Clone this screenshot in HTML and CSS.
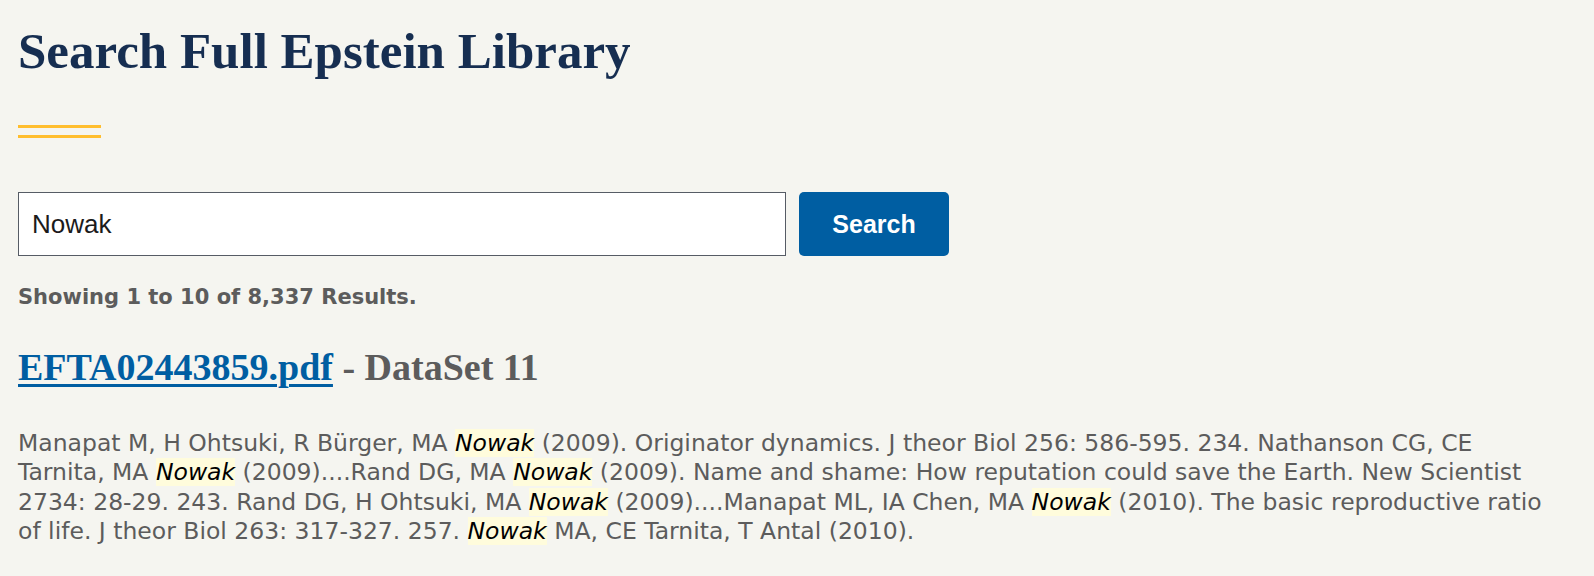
FILE: index.html
```html
<!DOCTYPE html>
<html lang="en">
<head>
<meta charset="utf-8">
<title>Search Full Epstein Library</title>
<link rel="stylesheet" href="styles.css">
</head>
<body>
<main class="page">
  <h1 class="title">Search Full Epstein Library</h1>
  <div class="rule"></div>
  <form class="search" onsubmit="return false">
    <input class="search-input" type="text" value="Nowak" aria-label="Search">
    <button class="search-btn" type="submit">Search</button>
  </form>
  <p class="count">Showing 1 to 10 of 8,337 Results.</p>
  <div class="result">
    <h2 class="result-title"><a class="result-link" href="#">EFTA02443859.pdf</a> - DataSet 11</h2>
    <p class="snippet">Manapat M, H Ohtsuki, R Bürger, MA <mark class="hl">Nowak</mark> (2009). Originator dynamics. J theor Biol 256: 586-595. 234. Nathanson CG, CE Tarnita, MA <mark class="hl">Nowak</mark> (2009)....Rand DG, MA <mark class="hl">Nowak</mark> (2009). Name and shame: How reputation could save the Earth. New Scientist 2734: 28-29. 243. Rand DG, H Ohtsuki, MA <mark class="hl">Nowak</mark> (2009)....Manapat ML, IA Chen, MA <mark class="hl">Nowak</mark> (2010). The basic reproductive ratio of life. J theor Biol 263: 317-327. 257. <mark class="hl">Nowak</mark> MA, CE Tarnita, T Antal (2010).</p>
  </div>
</main>
</body>
</html>
```
FILE: styles.css
```css
html, body {
  margin: 0;
  padding: 0;
  background: #f5f5f0;
}

.page {
  padding: 21px 18px 0 18px;
  font-family: "DejaVu Sans", sans-serif;
  color: #5c5c5c;
}

.title {
  margin: 0;
  font-family: "Liberation Serif", serif;
  font-weight: 700;
  font-size: 51px;
  line-height: 61px;
  color: #162e51;
}

.rule {
  width: 83px;
  height: 7px;
  margin-top: 43px;
  border-top: 3px solid #ffbe2e;
  border-bottom: 3px solid #ffbe2e;
}

.search {
  display: flex;
  gap: 13px;
  margin-top: 54px;
}

.search-input {
  box-sizing: border-box;
  width: 768px;
  height: 64px;
  margin: 0;
  padding: 0 0 0 13px;
  border: 1px solid #565c65;
  border-radius: 0;
  background: #ffffff;
  font-family: "Liberation Sans", Arial, sans-serif;
  font-size: 26px;
  color: #1b1b1b;
  outline: none;
}

.search-btn {
  box-sizing: border-box;
  width: 150px;
  height: 64px;
  margin: 0;
  border: 0;
  border-radius: 5px;
  background: #005ea2;
  color: #ffffff;
  font-family: "Liberation Sans", Arial, sans-serif;
  font-weight: 700;
  font-size: 25px;
  cursor: pointer;
}

.count {
  margin: 29px 0 0 0;
  font-weight: 700;
  font-size: 21px;
  line-height: 25px;
  color: #5c5c5c;
}

.result-title {
  margin: 35px 0 0 0;
  font-family: "Liberation Serif", serif;
  font-weight: 700;
  font-size: 38px;
  line-height: 44px;
  color: #5c5c5c;
}

.result-link {
  color: #005ea2;
  text-decoration: underline;
  text-decoration-thickness: 3px;
  text-underline-offset: 4px;
}

.snippet {
  margin: 40px 0 0 0;
  max-width: 1545px;
  font-size: 23.5px;
  line-height: 29.3px;
  color: #5c5c5c;
}

.hl {
  background: #fffcdc;
  color: #000000;
  font-style: italic;
}
```
